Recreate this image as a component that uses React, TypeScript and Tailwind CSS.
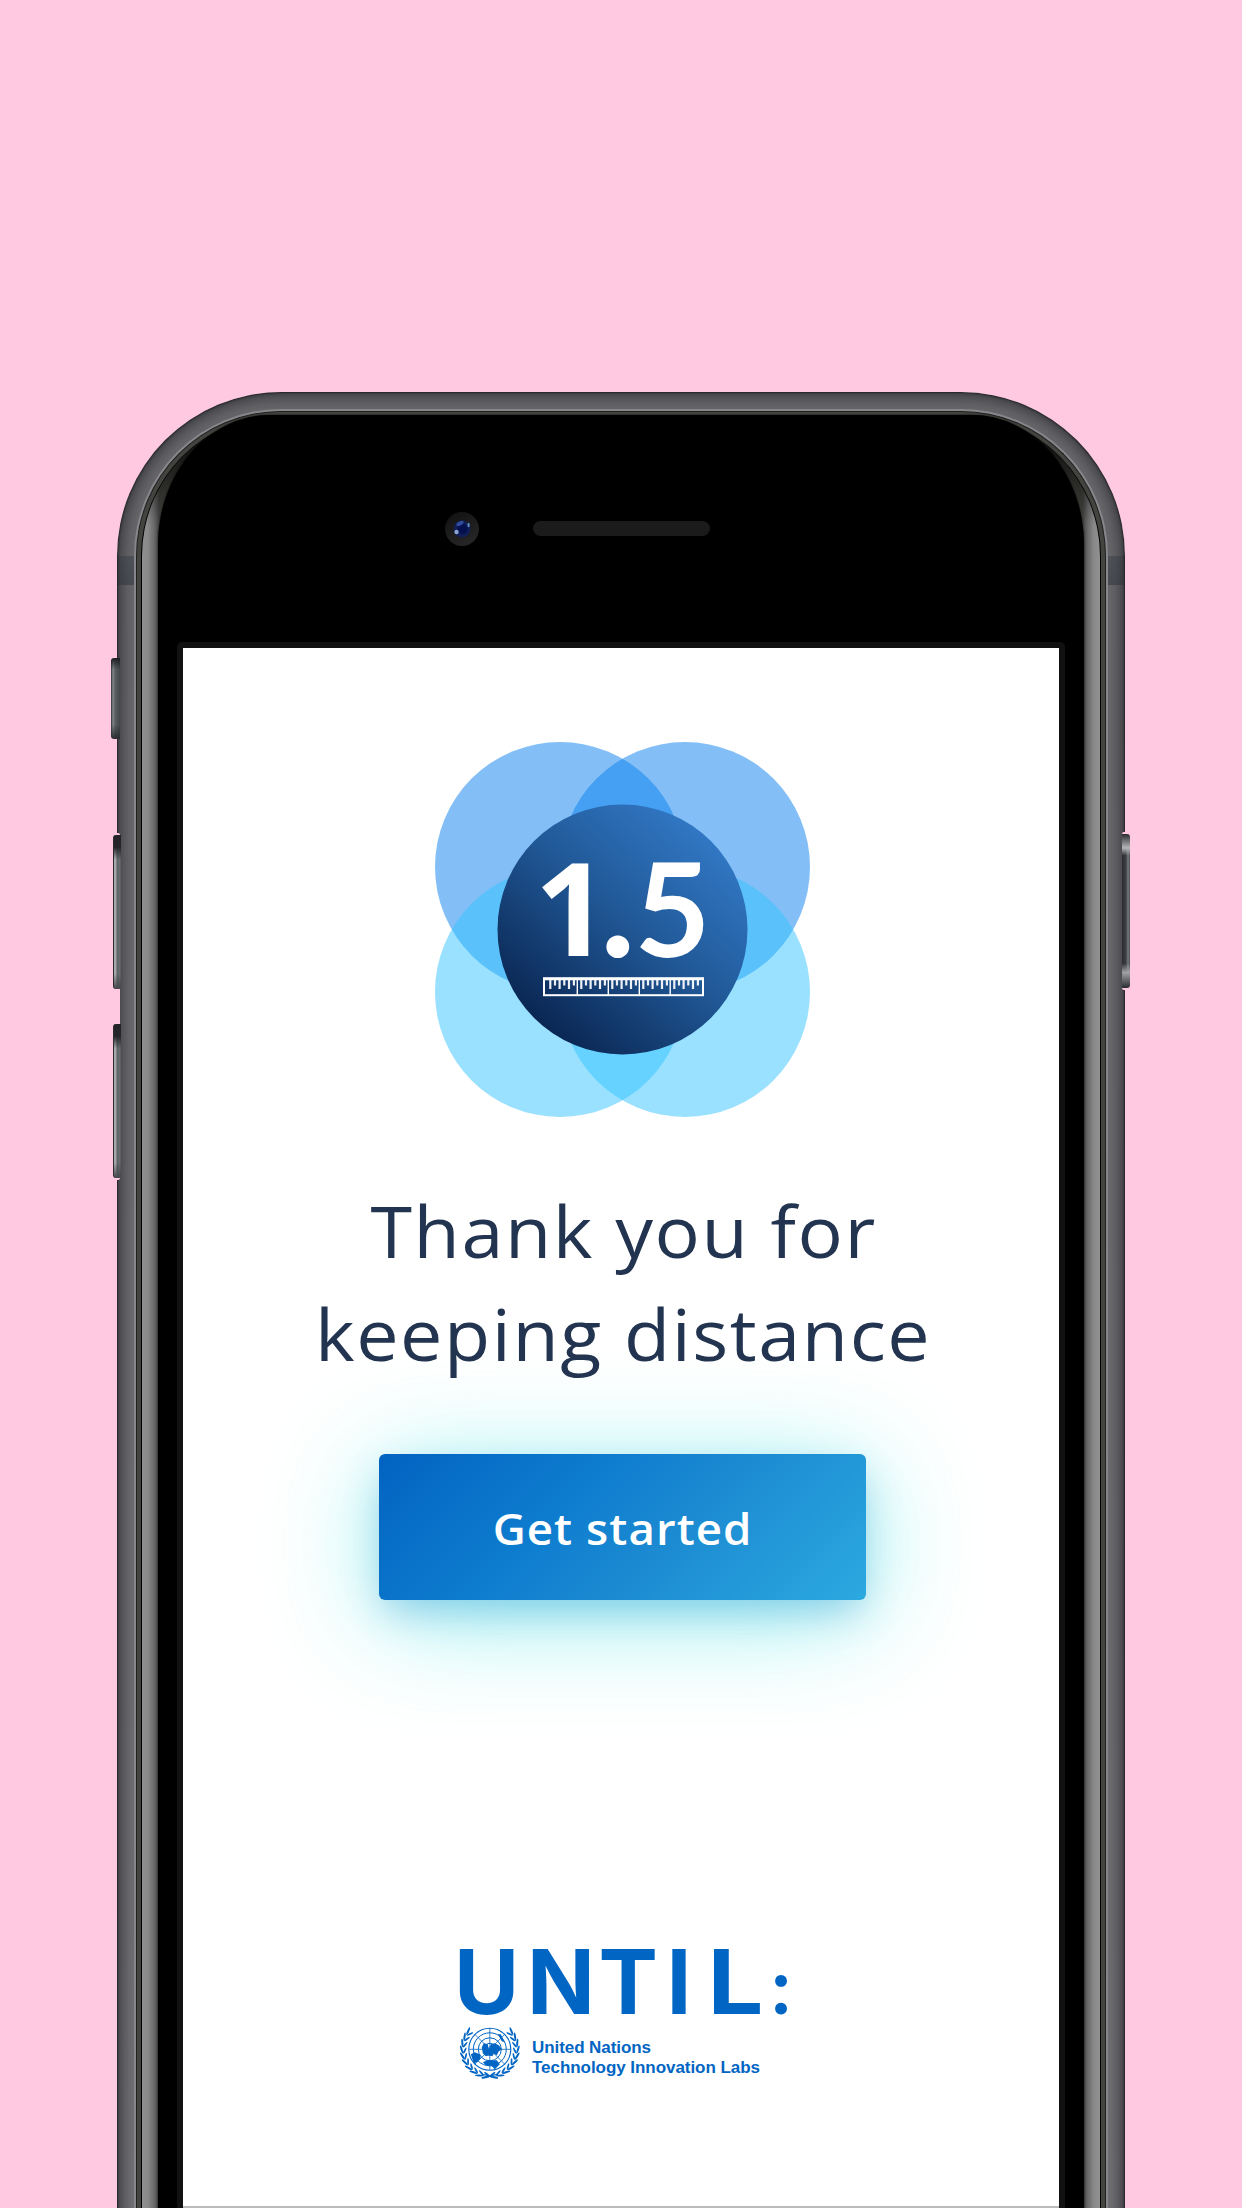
import React from "react";

function VolumeButton() {
  return (
    <div className="ml-[2px] h-[154px] w-2 rounded-l-[3px] border-l border-[#2c2c30] bg-[linear-gradient(180deg,#232327_0%,#26262a_8%,transparent_16%,transparent_90%,#45484b_100%),linear-gradient(90deg,#a5a8a9_0px,#a5a8a9_2px,#5c6164_3px,#6b6f72_6px,#333_8px)]" />
  );
}

function LeftRail() {
  return (
    <div className="z-10 -mr-[4px] flex w-[10px] flex-col pt-[266px]">
      <div className="h-[81px] w-[9px] rounded-l-[3px] bg-[linear-gradient(180deg,#1c1e20_0%,transparent_14%,transparent_82%,#2a2c2f_100%),linear-gradient(90deg,#303336_0px,#80888a_2px,#5a6062_4px,#454a4d_8px)]" />
      <div className="mt-[94px] flex w-[9px] flex-col gap-[35px] rounded-r-[2px] bg-[#ffcae1] py-[2px]">
        <VolumeButton />
        <VolumeButton />
      </div>
    </div>
  );
}

function RightRail() {
  return (
    <div className="z-10 -ml-[4px] flex w-[10px] flex-col items-end pt-[440px]">
      <div className="flex w-[9px] flex-col rounded-l-[2px] bg-[#ffcae1] py-[2px]">
        <div className="h-[154px] w-2 rounded-r-[3px] bg-[linear-gradient(180deg,#2b2c2f_0%,#b5b6b8_9%,transparent_14%,transparent_84%,#a0a1a4_90%,#2b2c2f_100%),linear-gradient(90deg,#2b2c30_0px,#3b3e43_4px,#777c80_6px,#4a4d50_8px)]" />
      </div>
    </div>
  );
}

function Camera() {
  return (
    <svg viewBox="0 0 34 34" className="h-[34px] w-[34px] rounded-full bg-[linear-gradient(150deg,#101010,#2a2a2a)]">
      <circle cx="17" cy="17" r="8.5" fill="#101e55" />
      <circle cx="17.5" cy="17" r="5" fill="#05104f" />
      <ellipse cx="15" cy="11.5" rx="4" ry="2" fill="#2f4c9c" transform="rotate(-30 15 11.5)" />
      <circle cx="11.5" cy="20" r="2.2" fill="#8ba3cf" />
      <ellipse cx="23.6" cy="13" rx="1.1" ry="2.2" fill="#5e8fc0" />
    </svg>
  );
}

function Phone({ children }: { children: React.ReactNode }) {
  return (
    <div className="flex h-[1846px] justify-center">
      <LeftRail />
      {/* brushed metal edge */}
      <div className="w-[1008px] overflow-hidden rounded-t-[164px] bg-[linear-gradient(180deg,transparent_164px,#50545a_164px,#484c52_193px,transparent_193px),linear-gradient(180deg,#67676b,#707075)] px-[17px] pt-[17px] pb-[30px] shadow-[inset_0_0_2px_1px_#232226,inset_0_0_15px_4px_#343438]">
        <div className="h-full rounded-t-[147px] bg-[#86868b] px-[2px] pt-[2px]">
          <div className="h-full rounded-t-[145px] border-x border-t border-[#20201f] bg-[#43443f] px-[4px] pt-[3px]">
            {/* curved glass reflection */}
            <div className="h-full rounded-t-[141px] border-x border-black bg-[linear-gradient(180deg,#000_0px,transparent_110px),linear-gradient(90deg,#909090_0px,#8a8a8a_6px,#6a6a6a_12px,#444_17px,transparent_17px),linear-gradient(270deg,#909090_0px,#8a8a8a_6px,#6a6a6a_12px,#444_17px,transparent_17px)] px-[16px]">
              <div className="flex h-full flex-col rounded-t-[112px_130px] bg-black px-[19px] shadow-[0_0_2px_#000]">
                <div className="flex h-[227px] items-start gap-[54px] pt-[97px] pl-[268px]">
                  <Camera />
                  <div className="mt-[9px] h-[15px] w-[177px] rounded-full bg-[#1b1b1b]" />
                </div>
                <div className="flex-1 rounded-t-[5px] bg-[#111] px-[6px] pt-[6px]">{children}</div>
              </div>
            </div>
          </div>
        </div>
      </div>
      <RightRail />
    </div>
  );
}

function DistanceLogo() {
  const segments = [0, 1, 2, 3, 4].map((i) => 111.3 + i * 31);
  const offsets = [4, 8.7, 13.3, 18, 22.7, 27.6];
  return (
    <svg viewBox="0 0 375 375" className="h-[375px] w-[375px]">
      <defs>
        <linearGradient id="core" x1="0.15" y1="0.9" x2="0.85" y2="0.1">
          <stop offset="0" stopColor="#09244f" />
          <stop offset="0.55" stopColor="#215998" />
          <stop offset="1" stopColor="#3279c6" />
        </linearGradient>
      </defs>
      <circle cx="125" cy="125" r="125" fill="#077fed" fillOpacity=".5" />
      <circle cx="250" cy="125" r="125" fill="#077fed" fillOpacity=".5" />
      <circle cx="125" cy="250" r="125" fill="#33c3ff" fillOpacity=".5" />
      <circle cx="250" cy="250" r="125" fill="#33c3ff" fillOpacity=".5" />
      <circle cx="187.5" cy="187.5" r="125" fill="url(#core)" />
      <g fill="#fff">
        <text x="99.5" y="213.5" fontFamily="Open Sans, sans-serif" fontWeight="700" fontSize="130">1</text>
        <text x="165" y="215" fontFamily="Lato, sans-serif" fontWeight="700" fontSize="150">.</text>
        <text x="199.5" y="214.5" fontFamily="Lato, sans-serif" fontWeight="700" fontSize="131">5</text>
      </g>
      <g fill="none" stroke="#fff">
        <rect x="109" y="236.2" width="159" height="17" strokeWidth="2" />
        <path d="M109 237.2H268" strokeWidth="2" />
        <path
          d={segments
            .flatMap((s) => offsets.map((o, j) => `M${s + o} 238v${j % 2 ? 5.5 : 9}`))
            .join("")}
          strokeWidth="2.2"
          strokeOpacity=".92"
        />
        <path d="M142.3 238v15M173.3 238v15M204.3 238v15M235.2 238v15" strokeWidth="1.4" />
      </g>
    </svg>
  );
}

function Wreath() {
  const leaves = Array.from({ length: 10 }, (_, i) => -40 + i * 13.5);
  return (
    <g>
      {leaves.map((a) => (
        <g key={a} transform={`rotate(${a})`}>
          <ellipse cx="28.2" cy="0" rx="1" ry="4.2" transform="rotate(18 28.2 0)" />
          <ellipse cx="25" cy="1" rx=".9" ry="3.4" transform="rotate(-26 25 1)" />
        </g>
      ))}
      <path d="M8 25Q2 25.5 -8 29" fill="none" stroke="#0065c3" strokeWidth="1.2" />
    </g>
  );
}

function Emblem() {
  return (
    <g transform="translate(489.8 2049.3)">
      <g fill="none" stroke="#0065c3" strokeWidth="1">
        <circle r="21" strokeWidth="1.1" />
        <circle r="16.5" />
        <circle r="11.5" />
        <circle r="6" />
        <path d="M0-21V21M-21 0H21M-15-15L15 15M15-15L-15 15" strokeWidth=".8" />
      </g>
      <path d="M-8-2l2-4 4 1 1 5 2-5 4-1 4 2 3 4-3 2-2 4-4-2 0 3-4-1-3 1-3-3zM-19 5l4-2 5 2 1 4-4 4-3 1zM-7 13l5-2 9 0 3 4-5 5-3-3-6-1zM8-15l3 0 4 8-3-1z" />
      <Wreath />
      <g transform="scale(-1 1)">
        <Wreath />
      </g>
    </g>
  );
}

function UntilLogo() {
  return (
    <svg viewBox="450 1940 345 145" className="h-[145px] w-[345px] overflow-visible" fill="#0065c3">
      <text y="2014" x="454 527 598.5 666.5" fontFamily="Inter, sans-serif" fontWeight="700" fontSize="89">UNTI</text>
      <text y="2014" x="707.5" fontFamily="Inter, sans-serif" fontWeight="700" fontSize="89" textLength="56" lengthAdjust="spacingAndGlyphs">L</text>
      <text y="2013.5" x="771" fontFamily="Lato, sans-serif" fontWeight="700" fontSize="78">:</text>
      <Emblem />
      <text x="532" y="2053" fontFamily="Liberation Sans, sans-serif" fontWeight="700" fontSize="17" textLength="119">United Nations</text>
      <text x="532" y="2073" fontFamily="Liberation Sans, sans-serif" fontWeight="700" fontSize="17" textLength="228">Technology Innovation Labs</text>
    </svg>
  );
}

export default function App() {
  return (
    <div className="h-[2208px] w-[1242px] overflow-hidden bg-[#ffcae1] pt-[392px] font-['Open_Sans',sans-serif]">
      <Phone>
        <main className="flex h-full flex-col items-center border-b-2 border-[#bbb] bg-white pt-[94px] pl-[3px]">
          <DistanceLogo />
          <h1 className="mt-[62px] flex flex-col items-center text-[72px] leading-[103px] whitespace-nowrap text-[#22344f]">
            <span className="scale-x-[1.048] pl-[2px] tracking-[1.5px]">Thank you for</span>
            <span className="scale-x-[1.048] pl-[2px] tracking-[1.5px]">keeping distance</span>
          </h1>
          <button className="mt-[69px] flex h-[146px] w-[487px] items-center justify-center rounded-[6px] bg-[linear-gradient(135deg,#0263c1,#0d7bce_35%,#1c8bd2_60%,#2ca9e0)] pt-[5px] text-[43px] font-semibold text-white shadow-[0_16px_36px_-6px_rgba(0,120,200,0.32),0_16px_110px_rgba(0,220,220,0.42)]">
            <span className="scale-x-[1.06] tracking-[1px]">Get started</span>
          </button>
          <div className="mt-[340px]">
            <UntilLogo />
          </div>
        </main>
      </Phone>
    </div>
  );
}
